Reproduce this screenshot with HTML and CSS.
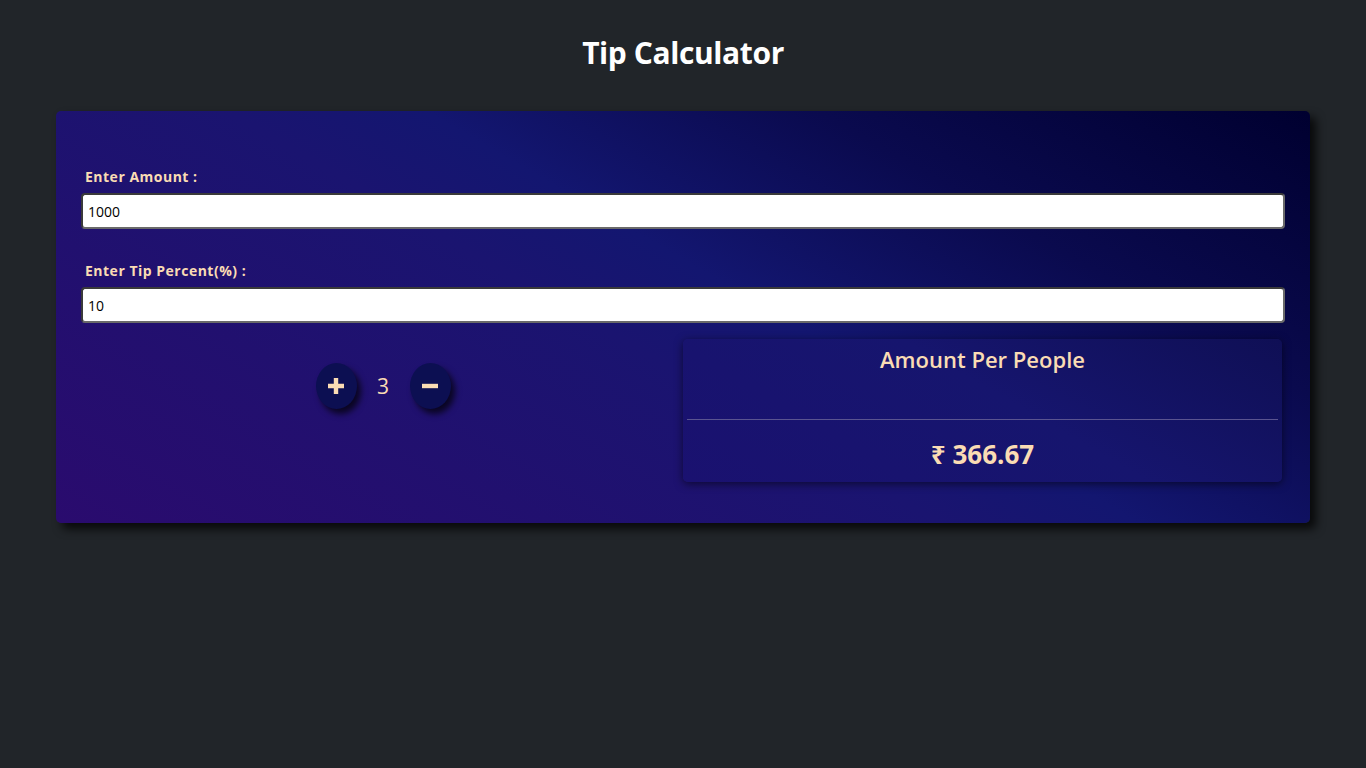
FILE: index.html
```html
<!DOCTYPE html>
<html lang="en">
<head>
<meta charset="utf-8">
<title>Tip Calculator</title>
<link rel="stylesheet" href="styles.css">
</head>
<body>
  <h1 class="title">Tip Calculator</h1>
  <main class="card">
    <div class="field">
      <label class="label" for="amount">Enter Amount :</label>
      <input class="input" id="amount" type="text" value="1000">
    </div>
    <div class="field">
      <label class="label" for="tip">Enter Tip Percent(%) :</label>
      <input class="input" id="tip" type="text" value="10">
    </div>
    <div class="bottom">
      <div class="people">
        <button class="round" aria-label="add">
          <svg width="18" height="18" viewBox="0 0 18 18"><path d="M9 1v16M1 9h16" stroke="#fadcb4" stroke-width="4.4" fill="none"/></svg>
        </button>
        <span class="count">3</span>
        <button class="round" aria-label="remove">
          <svg width="18" height="18" viewBox="0 0 18 18"><path d="M1 9h16" stroke="#fadcb4" stroke-width="4.4" fill="none"/></svg>
        </button>
      </div>
      <div class="result">
        <h2 class="result-title">Amount Per People</h2>
        <hr class="rule">
        <div class="result-value">₹ 366.67</div>
      </div>
    </div>
  </main>
</body>
</html>
```
FILE: styles.css
```css
* { box-sizing: border-box; }
html, body { margin: 0; padding: 0; }
body {
  background: #212529;
  font-family: "Open Sans", "Noto Sans", "DejaVu Sans", sans-serif;
  min-height: 768px;
  padding-top: 30px;
}
.title {
  margin: 0;
  text-align: center;
  color: #ffffff;
  font-size: 30px;
  font-weight: 700;
  line-height: 46px;
  letter-spacing: -0.4px;
}
.card {
  margin: 35px 56px 0 56px;
  height: 412px;
  border-radius: 5px;
  background: linear-gradient(30deg, #2a0b6e 0%, #1a1470 45%, #131670 55%, #0a0a4e 75%, #000030 100%);
  box-shadow: 6px 6px 10px rgba(0, 0, 0, 0.75);
  padding: 56px 25px 40px 25px;
}
.field { margin-bottom: 32px; }
.field + .field { margin-bottom: 16px; }
.label {
  display: block;
  color: #fadcb4;
  font-size: 14px;
  font-weight: 700;
  letter-spacing: 0.5px;
  padding-left: 4px;
  line-height: 19px;
  margin-bottom: 7px;
}
.input {
  display: block;
  width: 100%;
  height: 36px;
  border: 2px solid #3a3a3a;
  border-right-color: #6a6a6a;
  border-bottom-color: #6a6a6a;
  border-radius: 4px;
  background: #fff;
  color: #000;
  font-family: "Open Sans", "Noto Sans", sans-serif;
  font-size: 14px;
  padding: 0 5px;
  outline: none;
}
.bottom {
  display: flex;
}
.people {
  flex: 0 0 50%;
  display: flex;
  justify-content: center;
  align-items: flex-start;
  padding-top: 24px;
  padding-left: 2px;
}
.round {
  width: 41px;
  height: 46px;
  border-radius: 50%;
  border: none;
  background: #0c0f52;
  box-shadow: 4px 5px 6px rgba(0, 0, 0, 0.7);
  display: flex;
  align-items: center;
  justify-content: center;
  padding: 0;
  cursor: pointer;
}
.count {
  width: 53px;
  text-align: center;
  color: #fadcb4;
  font-size: 21px;
  line-height: 46px;
  font-weight: 400;
}
.result {
  flex: 1;
  margin-right: 3px;
  height: 143px;
  border-radius: 5px;
  background: linear-gradient(30deg, #1a1170 0%, #16156e 55%, #0f0f55 100%);
  box-shadow: 0 2px 8px rgba(0, 0, 0, 0.55);
  padding: 4px 4px 0 4px;
  text-align: center;
}
.result-title {
  margin: 0;
  color: #fadcb4;
  font-size: 22px;
  font-weight: 600;
  line-height: 32px;
}
.rule {
  margin: 44px 0 0 0;
  border: none;
  border-top: 1px solid #5a5490;
}
.result-value {
  color: #fadcb4;
  font-size: 26px;
  font-weight: 700;
  line-height: 36px;
  margin-top: 16px;
}
```
